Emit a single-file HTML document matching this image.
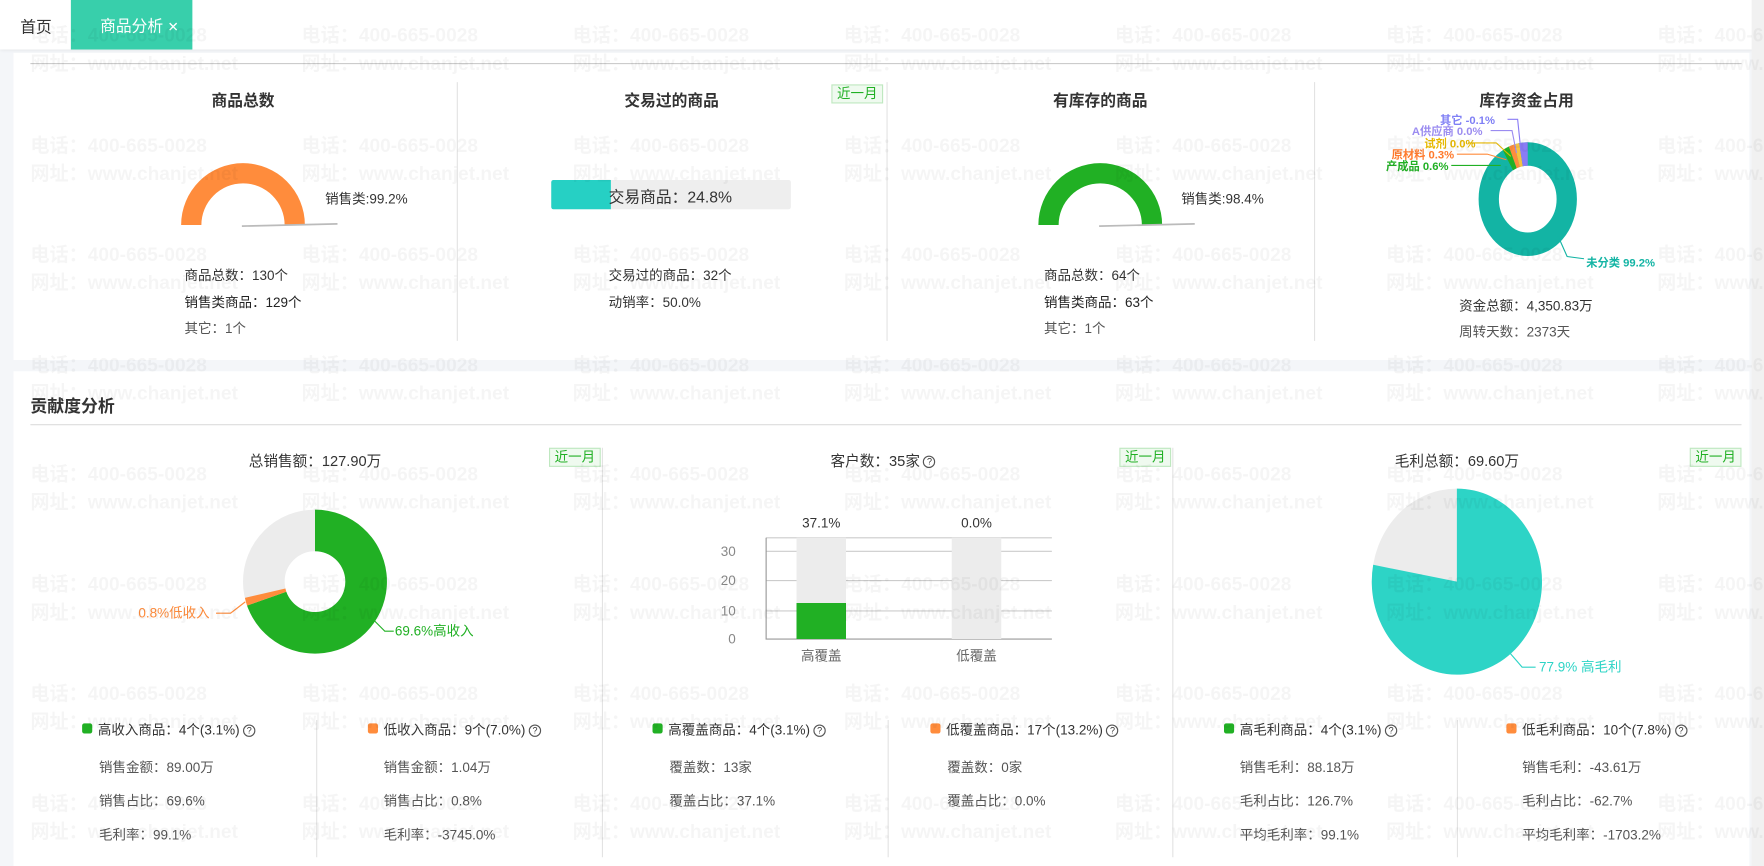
<!DOCTYPE html>
<html><head><meta charset="utf-8"><style>
*{margin:0;padding:0;box-sizing:border-box}
html,body{width:1764px;height:866px;overflow:hidden;background:#f4f6f9;font-family:"Liberation Sans","Noto Sans CJK SC",sans-serif;color:#333}
#w{position:absolute;left:0;top:0;width:1568px;height:770px;transform:scale(1.125);transform-origin:0 0}
.a{position:absolute;white-space:nowrap}
.t{font-size:12px}
.h{font-size:14px;font-weight:bold;transform:translateX(-50%)}
.tag{position:absolute;font-size:12px;color:#21b024;background:#effaef;border:1px solid #bfe8c0;padding:0 4px;line-height:15px}
.sq{position:absolute;width:9px;height:9px;border-radius:2px}
.q{display:inline-block;width:11px;height:11px;border:1px solid #555;border-radius:50%;font-size:8px;line-height:9px;text-align:center;margin-left:3px;vertical-align:1px}
.wm{position:absolute;font-size:17px;font-weight:bold;color:rgba(0,0,0,0.04);white-space:nowrap;pointer-events:none}
</style></head><body><div id="w">
<div class="a" style="left:0;top:0;width:1568px;height:44px;background:#fff;box-shadow:0 1px 3px rgba(0,0,0,.08)"></div>
<div class="a" style="left:18px;top:14px;font-size:14px;color:#333">首页</div>
<div class="a" style="left:63px;top:0;width:108px;height:44px;background:#38cfab;color:#fff;font-size:14px;line-height:46px;padding-left:26px">商品分析 <span style="font-size:12px">✕</span></div>
<div class="a" style="left:1557px;top:0;width:11px;height:770px;background:#f1f1f1"></div>
<div class="a" style="left:12px;top:47px;width:1543px;height:273px;background:#fff"></div>
<div class="a" style="left:27px;top:56px;width:1521px;height:1px;background:#ccc"></div>
<div class="a" style="left:12px;top:330px;width:1543px;height:440px;background:#fff"></div>
<div class="a" style="left:406px;top:73px;width:1px;height:230px;background:#e3e3e3"></div>
<div class="a" style="left:788px;top:73px;width:1px;height:230px;background:#e3e3e3"></div>
<div class="a" style="left:1168px;top:73px;width:1px;height:230px;background:#e3e3e3"></div>
<div class="a h" style="left:216px;top:79px">商品总数</div>
<div class="a h" style="left:597px;top:79px">交易过的商品</div>
<div class="a h" style="left:978px;top:79px">有库存的商品</div>
<div class="a h" style="left:1357px;top:79px">库存资金占用</div>
<div class="tag" style="left:739px;top:75px">近一月</div>
<svg class="a" style="left:0;top:0" width="1568" height="770">
<path d="M161,200 A55,55 0 0 1 271,200 L253,200 A37,37 0 0 0 179,200 Z" fill="#ff8c3c"/>
<path d="M215,201 L300,199" stroke="#bbb" stroke-width="1.5"/>
<path d="M923,200 A55,55 0 0 1 1033,200 L1015,200 A37,37 0 0 0 941,200 Z" fill="#21b024"/>
<path d="M977,201 L1062,199" stroke="#bbb" stroke-width="1.5"/>
<g transform="translate(1358 177) scale(0.95 1.1) translate(-1358 -177)">
<g transform="rotate(-90 1358 177)" fill="none" stroke-width="19">
<circle cx="1358" cy="177" r="36.5" stroke="#13b4a4"/>
<circle cx="1358" cy="177" r="36.5" stroke="#21b024" stroke-dasharray="5.1 300" stroke-dashoffset="-209.5"/>
<circle cx="1358" cy="177" r="36.5" stroke="#ff8c3c" stroke-dasharray="4.2 300" stroke-dashoffset="-214.6"/>
<circle cx="1358" cy="177" r="36.5" stroke="#f5c242" stroke-dasharray="3.8 300" stroke-dashoffset="-218.8"/>
<circle cx="1358" cy="177" r="36.5" stroke="#8a7cf5" stroke-dasharray="6.7 300" stroke-dashoffset="-222.6"/>
</g></g>
<g fill="none" stroke-width="1">
<path d="M1340,106 L1349,106 L1352,135" stroke="#8a7cf5"/>
<path d="M1325,116 L1344,116 L1348,136" stroke="#9b8cf0"/>
<path d="M1305,127 L1330,127 L1343,139" stroke="#e6b800"/>
<path d="M1295,137 L1322,137 L1339,142" stroke="#ff8c3c"/>
<path d="M1290,147 L1310,147 L1334,147" stroke="#21b024"/>
<path d="M1385,210 L1393,228 L1408,230" stroke="#13b4a4"/>
</g>
<text x="1280" y="110" font-size="10" font-weight="bold" fill="#7f7ff5">其它 -0.1%</text>
<text x="1255" y="120" font-size="10" font-weight="bold" fill="#9b8cf0">A供应商 0.0%</text>
<text x="1266" y="131" font-size="10" font-weight="bold" fill="#e6b800">试剂 0.0%</text>
<text x="1237" y="141" font-size="10" font-weight="bold" fill="#ff7a2c">原材料 0.3%</text>
<text x="1232" y="151" font-size="10" font-weight="bold" fill="#21b024">产成品 0.6%</text>
<text x="1410" y="237" font-size="10" font-weight="bold" fill="#13b4a4">未分类 99.2%</text>
<circle cx="280" cy="517" r="45.5" fill="none" stroke="#ececec" stroke-width="37"/>
<path d="M280,453 A64,64 0 1 1 219.6,538.3 L254.5,526 A27,27 0 1 0 280,490 Z" fill="#21b024"/>
<path d="M219.6,538.3 A64,64 0 0 1 217.7,531.4 L253.7,523.1 A27,27 0 0 0 254.5,526 Z" fill="#ff8c3c"/>
<path d="M192,545 L205,545 L218,535" stroke="#ff8c3c" fill="none"/>
<path d="M333,552 L342,561 L350,561" stroke="#21b024" fill="none"/>
<text x="123" y="549" font-size="12" fill="#ff8c3c">0.8%低收入</text>
<text x="351" y="565" font-size="12" fill="#21b024">69.6%高收入</text>
<g stroke="#ccc" stroke-width="1"><path d="M681,478 H935 M681,490 H935 M681,516 H935 M681,543 H935"/></g>
<path d="M681,478 V568 H935" stroke="#999" fill="none"/>
<rect x="708" y="478" width="44" height="90" fill="#ececec"/>
<rect x="708" y="536" width="44" height="32" fill="#21b024"/>
<rect x="846" y="478" width="44" height="90" fill="#ececec"/>
<g font-size="12" fill="#888" text-anchor="end"><text x="654" y="494">30</text><text x="654" y="520">20</text><text x="654" y="547">10</text><text x="654" y="572">0</text></g>
<g font-size="12" fill="#333" text-anchor="middle"><text x="730" y="469">37.1%</text><text x="868" y="469">0.0%</text></g>
<g font-size="12" fill="#666" text-anchor="middle"><text x="730" y="587">高覆盖</text><text x="868" y="587">低覆盖</text></g>
<g transform="translate(1295 517) scale(0.97 1.06) translate(-1295 -517)">
<circle cx="1295" cy="517" r="78" fill="#ececec"/>
<path d="M1295,517 L1295,439 A78,78 0 1 1 1218.3,502.9 Z" fill="#2dd4c6"/>
</g>
<path d="M1340,578 L1353,593 L1365,593" stroke="#2dd4c6" fill="none"/>
<text x="1368" y="597" font-size="12" fill="#2dd4c6">77.9% 高毛利</text>
</svg>
<div class="a t" style="left:289px;top:168px">销售类:99.2%</div>
<div class="a t" style="left:1050px;top:168px">销售类:98.4%</div>
<div class="a" style="left:490px;top:160px;width:213px;height:26px;background:#eee;border-radius:2px"></div>
<div class="a" style="left:490px;top:160px;width:53px;height:26px;background:#26d0c4;border-radius:2px 0 0 2px"></div>
<div class="a" style="left:541px;top:165px;font-size:14px">交易商品：24.8%</div>
<div class="a t" style="left:164px;top:236px">商品总数：130个</div>
<div class="a t" style="left:164px;top:260px;color:#222">销售类商品：129个</div>
<div class="a t" style="left:164px;top:283px;color:#555">其它：1个</div>
<div class="a t" style="left:541px;top:236px">交易过的商品：32个</div>
<div class="a t" style="left:541px;top:260px">动销率：50.0%</div>
<div class="a t" style="left:928px;top:236px">商品总数：64个</div>
<div class="a t" style="left:928px;top:260px;color:#222">销售类商品：63个</div>
<div class="a t" style="left:928px;top:283px;color:#555">其它：1个</div>
<div class="a t" style="left:1297px;top:263px">资金总额：4,350.83万</div>
<div class="a t" style="left:1297px;top:286px;color:#555">周转天数：2373天</div>
<div class="a" style="left:27px;top:350px;font-size:15px;font-weight:bold">贡献度分析</div>
<div class="a" style="left:27px;top:377px;width:1521px;height:1px;background:#ddd"></div>
<div class="a" style="left:535px;top:398px;width:1px;height:364px;background:#e3e3e3"></div>
<div class="a" style="left:1042px;top:398px;width:1px;height:364px;background:#e3e3e3"></div>
<div class="a" style="left:281px;top:640px;width:1px;height:122px;background:#e3e3e3"></div>
<div class="a" style="left:789px;top:640px;width:1px;height:122px;background:#e3e3e3"></div>
<div class="a" style="left:1295px;top:640px;width:1px;height:122px;background:#e3e3e3"></div>
<div class="a" style="left:280px;top:399px;font-size:13px;transform:translateX(-50%)">总销售额：127.90万</div>
<div class="a" style="left:785px;top:399px;font-size:13px;transform:translateX(-50%)">客户数：35家<span class="q">?</span></div>
<div class="a" style="left:1295px;top:399px;font-size:13px;transform:translateX(-50%)">毛利总额：69.60万</div>
<div class="tag" style="left:488px;top:398px">近一月</div>
<div class="tag" style="left:995px;top:398px">近一月</div>
<div class="tag" style="left:1502px;top:398px">近一月</div>
<div class="sq" style="left:73px;top:643px;background:#21b024"></div>
<div class="a t" style="left:87px;top:640px">高收入商品：4个(3.1%)<span class="q">?</span></div>
<div class="sq" style="left:327px;top:643px;background:#ff8c3c"></div>
<div class="a t" style="left:341px;top:640px">低收入商品：9个(7.0%)<span class="q">?</span></div>
<div class="sq" style="left:580px;top:643px;background:#21b024"></div>
<div class="a t" style="left:594px;top:640px">高覆盖商品：4个(3.1%)<span class="q">?</span></div>
<div class="sq" style="left:827px;top:643px;background:#ff8c3c"></div>
<div class="a t" style="left:841px;top:640px">低覆盖商品：17个(13.2%)<span class="q">?</span></div>
<div class="sq" style="left:1088px;top:643px;background:#21b024"></div>
<div class="a t" style="left:1102px;top:640px">高毛利商品：4个(3.1%)<span class="q">?</span></div>
<div class="sq" style="left:1339px;top:643px;background:#ff8c3c"></div>
<div class="a t" style="left:1353px;top:640px">低毛利商品：10个(7.8%)<span class="q">?</span></div>
<div style="color:#555">
<div class="a t" style="left:88px;top:673px">销售金额：89.00万</div>
<div class="a t" style="left:88px;top:703px">销售占比：69.6%</div>
<div class="a t" style="left:88px;top:733px">毛利率：99.1%</div>
<div class="a t" style="left:341px;top:673px">销售金额：1.04万</div>
<div class="a t" style="left:341px;top:703px">销售占比：0.8%</div>
<div class="a t" style="left:341px;top:733px">毛利率：-3745.0%</div>
<div class="a t" style="left:595px;top:673px">覆盖数：13家</div>
<div class="a t" style="left:595px;top:703px">覆盖占比：37.1%</div>
<div class="a t" style="left:842px;top:673px">覆盖数：0家</div>
<div class="a t" style="left:842px;top:703px">覆盖占比：0.0%</div>
<div class="a t" style="left:1102px;top:673px">销售毛利：88.18万</div>
<div class="a t" style="left:1102px;top:703px">毛利占比：126.7%</div>
<div class="a t" style="left:1102px;top:733px">平均毛利率：99.1%</div>
<div class="a t" style="left:1353px;top:673px">销售毛利：-43.61万</div>
<div class="a t" style="left:1353px;top:703px">毛利占比：-62.7%</div>
<div class="a t" style="left:1353px;top:733px">平均毛利率：-1703.2%</div>
</div>
<div id="wmk"></div>
<script>
var h='';var ys=[17,115,212,310,407,505,602,700];
for(var i=0;i<ys.length;i++){for(var j=0;j<7;j++){var x=27+j*241;
h+='<div class="wm" style="left:'+x+'px;top:'+ys[i]+'px">电话：400-665-0028</div>';
h+='<div class="wm" style="left:'+x+'px;top:'+(ys[i]+25)+'px">网址：www.chanjet.net</div>';}}
document.getElementById('wmk').innerHTML=h;
</script>
</div></body></html>
